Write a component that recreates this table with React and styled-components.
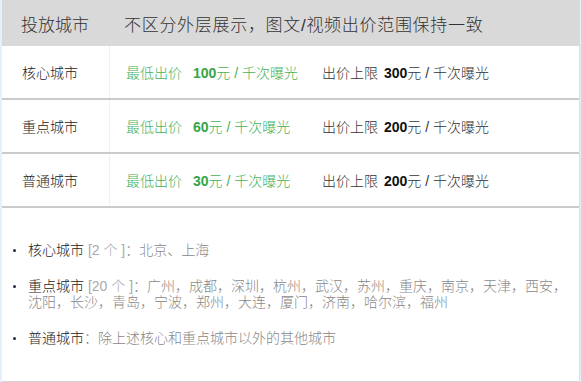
import React from 'react';
import styled, { createGlobalStyle } from 'styled-components';

const GlobalStyle = createGlobalStyle`
  html, body {
    margin: 0;
    padding: 0;
    background: #fff;
  }
  body {
    font-family: "Liberation Sans", "Noto Sans CJK SC", sans-serif;
    font-weight: 300;
  }
`;

const Page = styled.div`
  display: flex;
  height: 382px;
  box-sizing: border-box;
  border-left: 2px solid #e4f0fa;
  border-right: 1px solid #e4f0fa;
`;

const Panel = styled.div`
  flex: 1;
  display: flex;
  flex-direction: column;
  border-right: 1px solid #dcdcdc;
  border-bottom: 1px solid #d4d4d4;
`;

const HeadRow = styled.div`
  display: grid;
  grid-template-columns: 108px 1fr;
  height: 46px;
  align-items: center;
  background: #d9d9d9;
  color: #333;
  font-size: 17px;
`;

const HeadCell = styled.div`
  padding-left: ${(p) => p.$pad}px;
  letter-spacing: ${(p) => p.$track || 0}px;
`;

const Row = styled.div`
  display: grid;
  grid-template-columns: 108px 1fr;
  height: 54px;
  box-sizing: border-box;
  border-bottom: 2px solid #cbcbcb;
`;

const NameCell = styled.div`
  display: flex;
  align-items: center;
  padding-left: 20px;
  border-right: 1px solid #f0f0f0;
  font-size: 14px;
  color: #222;
`;

const PriceCell = styled.div`
  display: flex;
  align-items: center;
  padding-left: 16px;
  font-size: 14px;
  white-space: pre;
`;

const MinPrice = styled.span`
  display: inline-block;
  width: 196px;
  color: #43b25a;
`;

const MaxPrice = styled.span`
  color: #333;
`;

const Num = styled.b`
  font-weight: bold;
  margin-left: ${(p) => p.$gap}px;
  color: ${(p) => (p.$green ? '#35a548' : '#111')};
`;

const Notes = styled.ul`
  margin: 0;
  padding: 34px 10px 0 26px;
  list-style: none;
  font-size: 14px;
  line-height: 16px;
`;

const Note = styled.li`
  position: relative;
  margin-bottom: 20px;
  color: #888;

  &::before {
    content: '';
    position: absolute;
    left: -15px;
    top: 7px;
    width: 3px;
    height: 3px;
    border-radius: 50%;
    background: #1f2a44;
  }
`;

const Label = styled.span`
  color: #222;
`;

const Count = styled.span`
  color: #aaa;
`;

const tiers = [
  { name: '核心城市', min: '100', max: '300' },
  { name: '重点城市', min: '60', max: '200' },
  { name: '普通城市', min: '30', max: '200' },
];

export default function App() {
  return (
    <>
      <GlobalStyle />
      <Page>
        <Panel>
          <HeadRow>
            <HeadCell $pad={19}>投放城市</HeadCell>
            <HeadCell $pad={14} $track={0.7}>
              不区分外层展示，图文/视频出价范围保持一致
            </HeadCell>
          </HeadRow>
          {tiers.map((t) => (
            <Row key={t.name}>
              <NameCell>{t.name}</NameCell>
              <PriceCell>
                <MinPrice>
                  最低出价<Num $green $gap={11}>{t.min}</Num>元 / 千次曝光
                </MinPrice>
                <MaxPrice>
                  出价上限<Num $gap={6}>{t.max}</Num>元 / 千次曝光
                </MaxPrice>
              </PriceCell>
            </Row>
          ))}
          <Notes>
            <Note>
              <Label>核心城市</Label> <Count>[2 个 ]</Count>：北京、上海
            </Note>
            <Note>
              <Label>重点城市</Label> <Count>[20 个 ]</Count>
              ：广州，成都，深圳，杭州，武汉，苏州，重庆，南京，天津，西安，沈阳，长沙，青岛，宁波，郑州，大连，厦门，济南，哈尔滨，福州
            </Note>
            <Note>
              <Label>普通城市</Label>：除上述核心和重点城市以外的其他城市
            </Note>
          </Notes>
        </Panel>
      </Page>
    </>
  );
}
